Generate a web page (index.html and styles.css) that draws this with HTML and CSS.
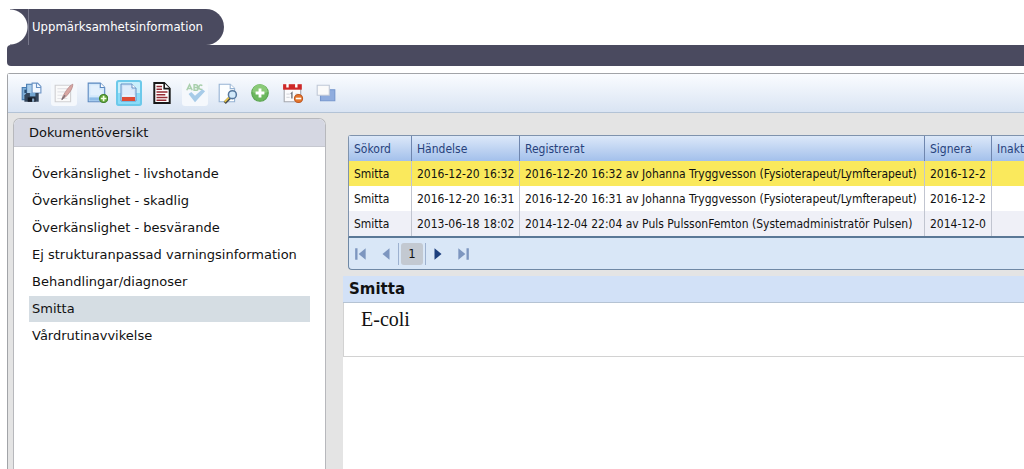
FILE: index.html
```html
<!DOCTYPE html>
<html lang="sv">
<head>
<meta charset="utf-8">
<title>Uppmärksamhetsinformation</title>
<link rel="stylesheet" href="styles.css">
</head>
<body>
<header class="top">
  <h1 class="tab"><span class="tab-label">Uppmärksamhetsinformation</span></h1>
  <div class="bar"></div>
</header>
<main class="window">
  <div class="toolbar" role="toolbar" aria-label="Verktyg">
    <button class="tool" aria-label="Spara"><svg viewBox="0 0 20 20"><path d="M2 5h8v11H2z" fill="#7eaed8" stroke="#477bb0"/><path d="M6 2h7v10H6z" fill="#a6cbea" stroke="#477bb0"/><path d="M11 1h5l3 3v6h-8z" fill="#f2f8ff" stroke="#6a92c4"/><path d="M15 1v4h4" fill="none" stroke="#6a92c4"/><path d="M6 10h11v8H4v-6z" fill="#34465c"/><path d="M9 10h5v3H9z" fill="#72a5d0"/><path d="M7 14h7v4H7z" fill="#141b26"/><path d="M11 15h2v3h-2z" fill="#8caac6"/><path d="M4 7h2v3H4z" fill="#294c70"/></svg></button>
    <button class="tool disabled" aria-label="Redigera" disabled><svg viewBox="0 0 20 20"><path d="M2 3h14v15H2z" fill="#fafafa" stroke="#cfcfd2"/><path d="M4 6h9M4 9h7M4 12h5M4 15h9" stroke="#e4e4e8"/><path d="M18 2c-3 1-7 7-9 11l-1 3 3-2c4-4 7-8 7-12z" fill="#d9a7a3" stroke="#b28484" stroke-width=".7"/><path d="M8 16l3-4" stroke="#707078"/></svg></button>
    <button class="tool" aria-label="Nytt dokument"><svg viewBox="0 0 20 20"><path d="M2 1h11l4 4v13H2z" fill="#d3e8fb" stroke="#5b88c0"/><path d="M4 3h8v4h3v5H4z" fill="#e3f0fd"/><path d="M13 1v4h4" fill="#fff" stroke="#5b88c0"/><path d="M3 14h12v3H3z" fill="#8ebce8"/><circle cx="16" cy="15" r="3.700" fill="#67a83b" stroke="#3f802a"/><path d="M16 12.500v5M13.500 15h5" stroke="#f4ffe8" stroke-width="1.500"/></svg></button>
    <button class="tool active" aria-label="Visa dokument" aria-pressed="true"><svg viewBox="0 0 20 20"><path d="M2 1h11l4 4v13H2z" fill="#cfe3f8" stroke="#6692c5"/><path d="M4 3h8v4h3v6H4z" fill="#dfecfb"/><path d="M13 1v4h4" fill="#fff" stroke="#6692c5"/><path d="M3 14h13v4H3z" fill="#df4c35"/><path d="M3 13h13" stroke="#f7faff"/></svg></button>
    <button class="tool" aria-label="Dokument"><svg viewBox="0 0 20 20"><path d="M3 1h9l5 5v13H3z" fill="#fff" stroke="#191919" stroke-width="1.800"/><path d="M12 1v5h5" fill="#fff" stroke="#191919" stroke-width="1.500"/><path d="M5 4h5M5 6.500h5M5 9h10M5 11.500h8M5 14h10M5 16.500h9" stroke="#962c35" stroke-width="1.400"/></svg></button>
    <button class="tool disabled" aria-label="Stavningskontroll" disabled><svg viewBox="0 0 24 24"><g fill="none" stroke="#a9cfac" stroke-width="1.600"><path d="M3 9l3-6 3 6M4 7h4M11 3v6h2c3 0 3-3 0-3h-2 2c3 0 2-3 0-3zM20 4c-4-3-6 5 0 4"/></g><path d="M5 13l3-2 4 4 8-7 3 2-11 12z" fill="#a7cbe8"/></svg></button>
    <button class="tool" aria-label="Förhandsgranska"><svg viewBox="0 0 20 20"><path d="M2 2h10l4 4v12H2z" fill="#fcfeff" stroke="#96b3d3"/><path d="M12 2v4h4" fill="#fff" stroke="#96b3d3"/><path d="M12 14l-5 5" stroke="#47494a" stroke-width="2.800"/><path d="M11 14l-4 4" stroke="#e8c84a" stroke-width="1.500"/><circle cx="14" cy="11.500" r="3.600" fill="#d2e9fa" stroke="#55779e" stroke-width="1.400"/></svg></button>
    <button class="tool" aria-label="Lägg till"><svg viewBox="0 0 20 20"><circle cx="10" cy="10" r="7.500" fill="#6cb75e" stroke="#57a24c"/><path d="M3 9a7 7 0 0114 0c-5 2-9 2-14 0z" fill="#8aca78"/><path d="M10 6v8M6 10h8" stroke="#fff" stroke-width="2.600"/></svg></button>
    <button class="tool" aria-label="Ta bort datum"><svg viewBox="0 0 20 20"><path d="M2 4h15v14H2z" fill="#fbfbfd" stroke="#a5a8af"/><path d="M1 2h17v5H1z" fill="#ce2828"/><path d="M5 1v4M13 1v4" stroke="#fff" stroke-width="2.200"/><path d="M4 11h3M4 14h3M12 11h3" stroke="#d9dbe0"/><path d="M8 11l1-1v5" fill="none" stroke="#747881" stroke-width="1.300"/><circle cx="15" cy="15" r="3.700" fill="#e5762c" stroke="#be5925"/><path d="M12.500 15h5" stroke="#fff" stroke-width="1.500"/></svg></button>
    <button class="tool" aria-label="Fönster"><svg viewBox="0 0 20 20"><path d="M5 7h13v10H5z" fill="#8facde" stroke="#7696cd"/><path d="M2 3h11v9H2z" fill="#fafafa" stroke="#c0c8d6"/></svg></button>
  </div>
  <div class="workspace">
    <nav class="overview" aria-labelledby="overview-title">
      <h2 class="overview-title" id="overview-title">Dokumentöversikt</h2>
      <ul class="topics">
        <li><a class="topic" href="#">Överkänslighet - livshotande</a></li>
        <li><a class="topic" href="#">Överkänslighet - skadlig</a></li>
        <li><a class="topic" href="#">Överkänslighet - besvärande</a></li>
        <li><a class="topic" href="#">Ej strukturanpassad varningsinformation</a></li>
        <li><a class="topic" href="#">Behandlingar/diagnoser</a></li>
        <li><a class="topic selected" href="#" aria-current="true">Smitta</a></li>
        <li><a class="topic" href="#">Vårdrutinavvikelse</a></li>
      </ul>
    </nav>
    <section class="content">
      <div class="grid">
        <table class="records">
          <colgroup><col class="c-term"><col class="c-event"><col class="c-reg"><col class="c-sign"><col></colgroup>
          <thead><tr><th>Sökord</th><th>Händelse</th><th>Registrerat</th><th><div class="clip sortable">Signerat</div></th><th>Inaktiverat</th></tr></thead>
          <tbody>
            <tr class="current"><td>Smitta</td><td>2016-12-20 16:32</td><td>2016-12-20 16:32 av Johanna Tryggvesson (Fysioterapeut/Lymfterapeut)</td><td><div class="clip">2016-12-20</div></td><td></td></tr>
            <tr><td>Smitta</td><td>2016-12-20 16:31</td><td>2016-12-20 16:31 av Johanna Tryggvesson (Fysioterapeut/Lymfterapeut)</td><td><div class="clip">2016-12-20</div></td><td></td></tr>
            <tr class="alt"><td>Smitta</td><td>2013-06-18 18:02</td><td>2014-12-04 22:04 av Puls PulssonFemton (Systemadministratör Pulsen)</td><td><div class="clip">2014-12-04</div></td><td></td></tr>
          </tbody>
        </table>
        <div class="pager">
          <button class="page-btn" aria-label="Första sidan" disabled><svg viewBox="0 0 12 12"><path d="M1 1h2v10H1zM10 1v10L4 6z"/></svg></button>
          <button class="page-btn" aria-label="Föregående sida" disabled><svg viewBox="0 0 12 12"><path d="M9 1v10L3 6z"/></svg></button>
          <span class="page-slot"><button class="page-num" aria-current="page">1</button></span>
          <button class="page-btn" aria-label="Nästa sida"><svg viewBox="0 0 12 12"><path d="M3 1v10l6-5z"/></svg></button>
          <button class="page-btn last" aria-label="Sista sidan"><svg viewBox="0 0 12 12"><path d="M2 1v10l6-5zM9 1h2v10H9z"/></svg></button>
        </div>
      </div>
      <article class="detail">
        <h2 class="detail-title">Smitta</h2>
        <p class="detail-text">E-coli</p>
      </article>
    </section>
  </div>
</main>
</body>
</html>
```
FILE: styles.css
```css
* { box-sizing: border-box; }
body {
  margin: 0;
  padding: 9px 0 0 7px;
  min-height: 100vh;
  display: flex;
  flex-direction: column;
  overflow: hidden;
  background: #fff;
  color: #111;
  font-family: "DejaVu Sans", Verdana, sans-serif;
  font-size: 13px;
}
h1, h2, p, ul { margin: 0; padding: 0; font-weight: normal; }
button { padding: 0; border: 0; background: none; font: inherit; color: inherit; }
svg { display: block; }

.top { margin-bottom: 7px; }
.tab {
  width: fit-content;
  height: 36px;
  margin-left: 3px;
  padding-left: 18px;
  border-radius: 0 18px 18px 0;
  background: radial-gradient(circle at 0 50%, #fff 17px, #4a4a5f 18px);
  color: #fff;
  font-family: "DejaVu Sans Condensed", Tahoma, sans-serif;
  font-size: 13px;
  line-height: 36px;
}
.tab-label {
  display: block;
  padding: 0 21px 0 3px;
  border-left: 1px solid #77778a;
}
.bar { height: 21px; border-radius: 4px 0 0 4px; background: #4a4a5f; }

.window {
  flex: 1;
  display: flex;
  flex-direction: column;
  border: 1px solid #a2a4a8;
  border-width: 1px 0 0 1px;
  border-radius: 3px 0 0 0;
  background: #e4e4e4;
}
.toolbar {
  height: 39px;
  padding-left: 7px;
  display: grid;
  grid-template-columns: repeat(10, minmax(0, 1fr));
  grid-auto-flow: column;
  align-items: center;
  justify-items: center;
  padding-right: calc(100% - 334px);
  border-bottom: 1px solid #b3c3d6;
  background: linear-gradient(#fafcff, #d9e4f3);
}
.tool {
  width: 26px;
  height: 26px;
  display: grid;
  place-items: center;
  border-radius: 3px;
}
.tool svg { width: 22px; height: 22px; }
.tool.disabled { background: #f5f8fc; }
.tool.active {
  box-shadow: inset 0 0 0 2px #6cc9ea;
  background: linear-gradient(#c9effc 50%, #8bdcf8 50%);
}
.tool.active svg { width: 20px; height: 20px; }

.workspace { flex: 1; display: flex; padding: 5px 0 0 5px; }
.overview {
  flex: none;
  width: 313px;
  border: 1px solid #b7b8bc;
  border-bottom: 0;
  border-radius: 7px 7px 0 0;
  background: #fff;
}
.overview-title {
  padding-left: 15px;
  border-bottom: 1px solid #c6c8d0;
  border-radius: 6px 6px 0 0;
  background: #d5d7e2;
  font-size: 13px;
  line-height: 27px;
}
.topics { padding: 14px 15px; list-style: none; }
.topic {
  display: block;
  margin-bottom: 1px;
  padding-left: 3px;
  color: inherit;
  line-height: 26px;
  text-decoration: none;
  white-space: nowrap;
}
.selected { background: #d5dde3; }

.content {
  flex: 1;
  min-width: 0;
  margin-left: 17px;
  display: flex;
  flex-direction: column;
}
.grid {
  margin: 17px 0 6px 5px;
  font-family: "DejaVu Sans Condensed", Tahoma, sans-serif;
  font-size: 12px;
}
.records {
  width: 100%;
  table-layout: fixed;
  border-collapse: separate;
  border-spacing: 0;
  border: 1px solid #7f93ad;
  border-right: 0;
  border-bottom: 2px solid #5a7896;
  border-radius: 3px 0 0 0;
  background: #fff;
}
.c-term { width: 62px; }
.c-event { width: 108px; }
.c-reg { width: 405px; }
.c-sign { width: 67px; }
.records th, .records td {
  height: 25px;
  padding: 0 5px;
  overflow: hidden;
  white-space: nowrap;
  text-align: left;
  font-weight: normal;
}
.records th {
  background: linear-gradient(#dce8f9, #a3c0eb);
  color: #27427c;
}
.records th + th { border-left: 1px solid #6f86ae; }
.records td + td { border-left: 1px solid #c1c5d0; }
.clip { overflow: hidden; }
.sortable { margin-right: 14px; }
.current td { background: #fae95c; }
.alt td { background: #eff0f7; }
.pager {
  height: 32px;
  padding-left: 5px;
  display: flex;
  align-items: center;
  gap: 11px;
  border: 1px solid #6f88a5;
  border-width: 0 0 1px 1px;
  border-radius: 0 0 0 4px;
  background: #d9e7f7;
}
.page-btn svg { width: 14px; height: 14px; fill: #1d3f7d; }
.page-btn:disabled svg, .page-btn.last svg { fill: #7d96bf; }
.page-slot {
  margin: 0 -6px;
  padding: 0 2px;
  border: 1px solid #9db1cf;
  border-width: 0 1px;
}
.page-num {
  width: 22px;
  height: 22px;
  border-radius: 3px;
  background: #c3c9d1;
  font-size: 13px;
}
.detail {
  flex: 1;
  background: #fff;
}
.detail-title {
  padding-left: 6px;
  border-bottom: 1px solid #b5c3d3;
  background: #d2e1f7;
  font-size: 15px;
  font-weight: bold;
  line-height: 26px;
}
.detail-text {
  height: 54px;
  padding: 4px 17px;
  border: 1px solid #d2d2d2;
  border-width: 0 0 1px 1px;
  font-family: "Liberation Serif", "Times New Roman", serif;
  font-size: 20px;
  line-height: 24px;
}
```
